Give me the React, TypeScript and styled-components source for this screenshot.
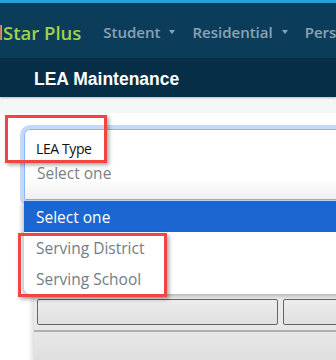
import styled, { createGlobalStyle } from "styled-components";

const GlobalStyle = createGlobalStyle`
  html, body {
    margin: 0;
    padding: 0;
    background: #ffffff;
    overflow: hidden;
  }
  body {
    font-family: "Open Sans", "Noto Sans", sans-serif;
  }
`;

const Page = styled.div`
  position: relative;
  width: 336px;
  height: 360px;
  overflow: hidden;
`;

const TopStrip = styled.div`
  height: 3px;
  background: #2b9fda;
`;

const NavBar = styled.div`
  height: 55px;
  background: #0b3d5b;
  display: flex;
  align-items: center;
  white-space: nowrap;
  padding-top: 3px;
  box-sizing: border-box;
  overflow: hidden;
`;

const Brand = styled.div`
  display: flex;
  align-items: center;
  font-size: 18.5px;
  font-weight: 600;
  color: #a3d04a;
  margin-right: 22px;

  &::before {
    content: "";
    width: 2px;
    height: 15px;
    margin-right: 1px;
    background: linear-gradient(90deg, #c95a5a, #a3d04a);
  }
`;

const NavItem = styled.div`
  display: flex;
  align-items: center;
  font-size: 15px;
  font-weight: 600;
  color: #8ba3b4;
  margin-right: 17px;
`;

const Caret = styled.span`
  width: 0;
  height: 0;
  margin-left: 9px;
  border-left: 3.5px solid transparent;
  border-right: 3.5px solid transparent;
  border-top: 4px solid #8ba3b4;
`;

const SubHeader = styled.div`
  height: 39px;
  background: #062e46;
  display: flex;
  align-items: center;
  padding: 3px 0 0 34px;
  box-sizing: border-box;
  font-family: "Liberation Sans", Arial, sans-serif;
  font-weight: 700;
  font-size: 17.5px;
  color: #ffffff;
  box-shadow: 0 1px 2px rgba(0, 0, 0, 0.25);
  position: relative;
`;

const Content = styled.div`
  background: #f5f6f8;
  padding-top: 16px;
`;

const Panel = styled.div`
  background: #ffffff;
  padding: 16px 0 0 20px;
  height: 260px;
`;

const SelectBox = styled.div`
  width: 400px;
  height: 71px;
  border: 1px solid #86b7fe;
  border-radius: 6px;
  box-shadow: 0 0 0 4px #c4d9f8;
  margin-left: 4px;
  box-sizing: border-box;
  padding: 10px 0 0 12px;
  background: linear-gradient(180deg, #ffffff 70%, #efefef 100%);
  border-bottom-color: #a6adb4;
  border-bottom-left-radius: 2px;
`;

const Label = styled.div`
  font-size: 14px;
  letter-spacing: -0.4px;
  color: #111111;
  line-height: 17px;
  height: 17px;
  margin-left: -1px;
`;

const Placeholder = styled.div`
  font-size: 15.5px;
  color: #7a7f85;
  line-height: 20px;
  margin-top: 6px;
`;

const Options = styled.div`
  width: 400px;
  margin: 1px 0 -1px 4px;
  background: #ffffff;
  border-bottom-left-radius: 6px;
  box-shadow: -2px 2px 4px rgba(0, 0, 0, 0.25);
  position: relative;
  z-index: 2;
`;

const Option = styled.div<{ $active?: boolean }>`
  height: 31px;
  display: flex;
  align-items: center;
  padding-left: 12px;
  font-size: 15.5px;
  color: ${(p) => (p.$active ? "#ffffff" : "#727c88")};
  background: ${(p) => (p.$active ? "#1b66d0" : "transparent")};
`;

const Grid = styled.div`
  width: 400px;
  margin-left: 14px;
  border-top: 1px solid #a8a8a8;
  background: linear-gradient(180deg, #ececec, #e2e2e2);
  box-shadow: -3px 0 4px rgba(0, 0, 0, 0.12);
`;

const GridRow = styled.div`
  display: flex;
  gap: 5px;
  padding: 5px 0 5px 3px;
  border-bottom: 2px solid #b0b0b0;
`;

const GridCell = styled.div<{ $w: number }>`
  width: ${(p) => p.$w}px;
  height: 24px;
  border: 1px solid #666666;
  border-radius: 2px;
  background: linear-gradient(180deg, #ececec, #e0e0e0);
`;

const GridBody = styled.div`
  height: 30px;
  background: linear-gradient(180deg, #e8e8e8, #dedede);
`;

const Callout = styled.div<{ $x: number; $y: number; $w: number; $h: number }>`
  position: absolute;
  left: ${(p) => p.$x}px;
  top: ${(p) => p.$y}px;
  width: ${(p) => p.$w}px;
  height: ${(p) => p.$h}px;
  border: 3px solid #f04545;
  box-sizing: border-box;
  box-shadow: 2px 2px 4px rgba(0, 0, 0, 0.35);
  z-index: 5;
`;

export default function App() {
  return (
    <>
      <GlobalStyle />
      <Page>
        <TopStrip />
        <NavBar>
          <Brand>Star Plus</Brand>
          <NavItem>
            Student
            <Caret />
          </NavItem>
          <NavItem>
            Residential
            <Caret />
          </NavItem>
          <NavItem>Personnel</NavItem>
        </NavBar>
        <SubHeader>LEA Maintenance</SubHeader>
        <Content>
          <Panel>
            <SelectBox>
              <Label>LEA Type</Label>
              <Placeholder>Select one</Placeholder>
            </SelectBox>
            <Options>
              <Option $active>Select one</Option>
              <Option>Serving District</Option>
              <Option>Serving School</Option>
            </Options>
            <Grid>
              <GridRow>
                <GridCell $w={241} />
                <GridCell $w={150} />
              </GridRow>
              <GridBody />
            </Grid>
          </Panel>
        </Content>
        <Callout $x={5} $y={115} $w={102} $h={48} />
        <Callout $x={18} $y={233} $w={149} $h={64} />
      </Page>
    </>
  );
}
